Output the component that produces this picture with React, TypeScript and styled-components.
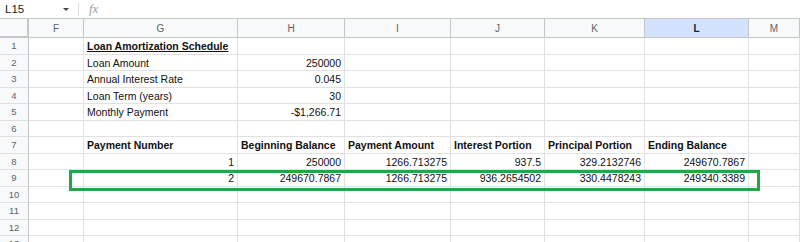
import React from 'react';
import styled, { createGlobalStyle } from 'styled-components';

const GlobalStyle = createGlobalStyle`
  html, body {
    margin: 0;
    padding: 0;
    background: #fff;
    font-family: "Liberation Sans", Arial, sans-serif;
    overflow: hidden;
  }
`;

const Page = styled.div`
  position: relative;
  width: 800px;
  height: 242px;
  overflow: hidden;
  background: #fff;
`;

const FormulaBar = styled.div`
  display: flex;
  align-items: center;
  height: 18px;
  box-sizing: border-box;
  font-size: 11.5px;
  color: #202124;
`;

const NameBox = styled.div`
  width: 58px;
  padding-left: 5px;
`;

const Caret = styled.div`
  width: 0;
  height: 0;
  border-left: 3px solid transparent;
  border-right: 3px solid transparent;
  border-top: 3.5px solid #444;
  margin-right: 9px;
`;

const Divider = styled.div`
  width: 1px;
  height: 13px;
  background: #dadce0;
  margin-right: 10px;
`;

const Fx = styled.span`
  font-family: "Liberation Serif", serif;
  font-style: italic;
  color: #9aa0a6;
  font-size: 13px;
`;

const Grid = styled.div`
  display: grid;
  grid-template-columns: 29px 55px 154px 107px 106px 94px 100px 104px 1fr;
  grid-template-rows: 19px repeat(13, 16.5px);
  border-top: 1px solid #c4c7c5;
`;

const Corner = styled.div`
  background: #f8f9fa;
  border-right: 2px solid #c4c7c5;
  border-bottom: 2px solid #c4c7c5;
  box-sizing: border-box;
`;

const ColHead = styled.div<{ $active?: boolean }>`
  display: flex;
  align-items: center;
  justify-content: center;
  background: ${p => (p.$active ? '#d3e3fd' : '#f8f9fa')};
  color: ${p => (p.$active ? '#0b1f4a' : '#5f6368')};
  font-weight: ${p => (p.$active ? 700 : 400)};
  font-size: 10px;
  border-right: 1px solid #c4c7c5;
  border-bottom: 1px solid #c4c7c5;
  box-sizing: border-box;
`;

const RowHead = styled.div`
  display: flex;
  align-items: center;
  justify-content: center;
  background: #f8f9fa;
  color: #5f6368;
  font-size: 9.5px;
  border-right: 1px solid #c4c7c5;
  border-bottom: 1px solid #e1e1e1;
  box-sizing: border-box;
`;

const Cell = styled.div<{ $align?: 'left' | 'right'; $bold?: boolean; $underline?: boolean }>`
  display: flex;
  align-items: center;
  justify-content: ${p => (p.$align === 'right' ? 'flex-end' : 'flex-start')};
  padding: 1px 3px 0 3px;
  font-size: 10.5px;
  color: #111;
  font-weight: ${p => (p.$bold ? 700 : 400)};
  text-decoration: ${p => (p.$underline ? 'underline' : 'none')};
  border-right: 1px solid #e1e1e1;
  border-bottom: 1px solid #e1e1e1;
  box-sizing: border-box;
  white-space: nowrap;
  overflow: hidden;
`;

const Highlight = styled.div`
  position: absolute;
  left: 69px;
  top: 170px;
  width: 691px;
  height: 21px;
  border: 3px solid #1fa748;
  box-sizing: border-box;
  pointer-events: none;
`;

type C = { t?: string; r?: boolean; b?: boolean; u?: boolean };

const cols = ['F', 'G', 'H', 'I', 'J', 'K', 'L', 'M'];

const rows: C[][] = [
  [{}, { t: 'Loan Amortization Schedule', b: true, u: true }],
  [{}, { t: 'Loan Amount' }, { t: '250000', r: true }],
  [{}, { t: 'Annual Interest Rate' }, { t: '0.045', r: true }],
  [{}, { t: 'Loan Term (years)' }, { t: '30', r: true }],
  [{}, { t: 'Monthly Payment' }, { t: '-$1,266.71', r: true }],
  [],
  [
    {},
    { t: 'Payment Number', b: true },
    { t: 'Beginning Balance', b: true },
    { t: 'Payment Amount', b: true },
    { t: 'Interest Portion', b: true },
    { t: 'Principal Portion', b: true },
    { t: 'Ending Balance', b: true },
  ],
  [
    {},
    { t: '1', r: true },
    { t: '250000', r: true },
    { t: '1266.713275', r: true },
    { t: '937.5', r: true },
    { t: '329.2132746', r: true },
    { t: '249670.7867', r: true },
  ],
  [
    {},
    { t: '2', r: true },
    { t: '249670.7867', r: true },
    { t: '1266.713275', r: true },
    { t: '936.2654502', r: true },
    { t: '330.4478243', r: true },
    { t: '249340.3389', r: true },
  ],
  [],
  [],
  [],
  [],
];

export default function App() {
  return (
    <Page>
      <GlobalStyle />
      <FormulaBar>
        <NameBox>L15</NameBox>
        <Caret />
        <Divider />
        <Fx>fx</Fx>
      </FormulaBar>
      <Grid>
        <Corner />
        {cols.map(c => (
          <ColHead key={c} $active={c === 'L'}>
            {c}
          </ColHead>
        ))}
        {rows.map((row, i) => (
          <React.Fragment key={i}>
            <RowHead>{i + 1}</RowHead>
            {cols.map((c, j) => {
              const cell = row[j] || {};
              return (
                <Cell key={c} $align={cell.r ? 'right' : 'left'} $bold={cell.b} $underline={cell.u}>
                  {cell.t}
                </Cell>
              );
            })}
          </React.Fragment>
        ))}
      </Grid>
      <Highlight />
    </Page>
  );
}
